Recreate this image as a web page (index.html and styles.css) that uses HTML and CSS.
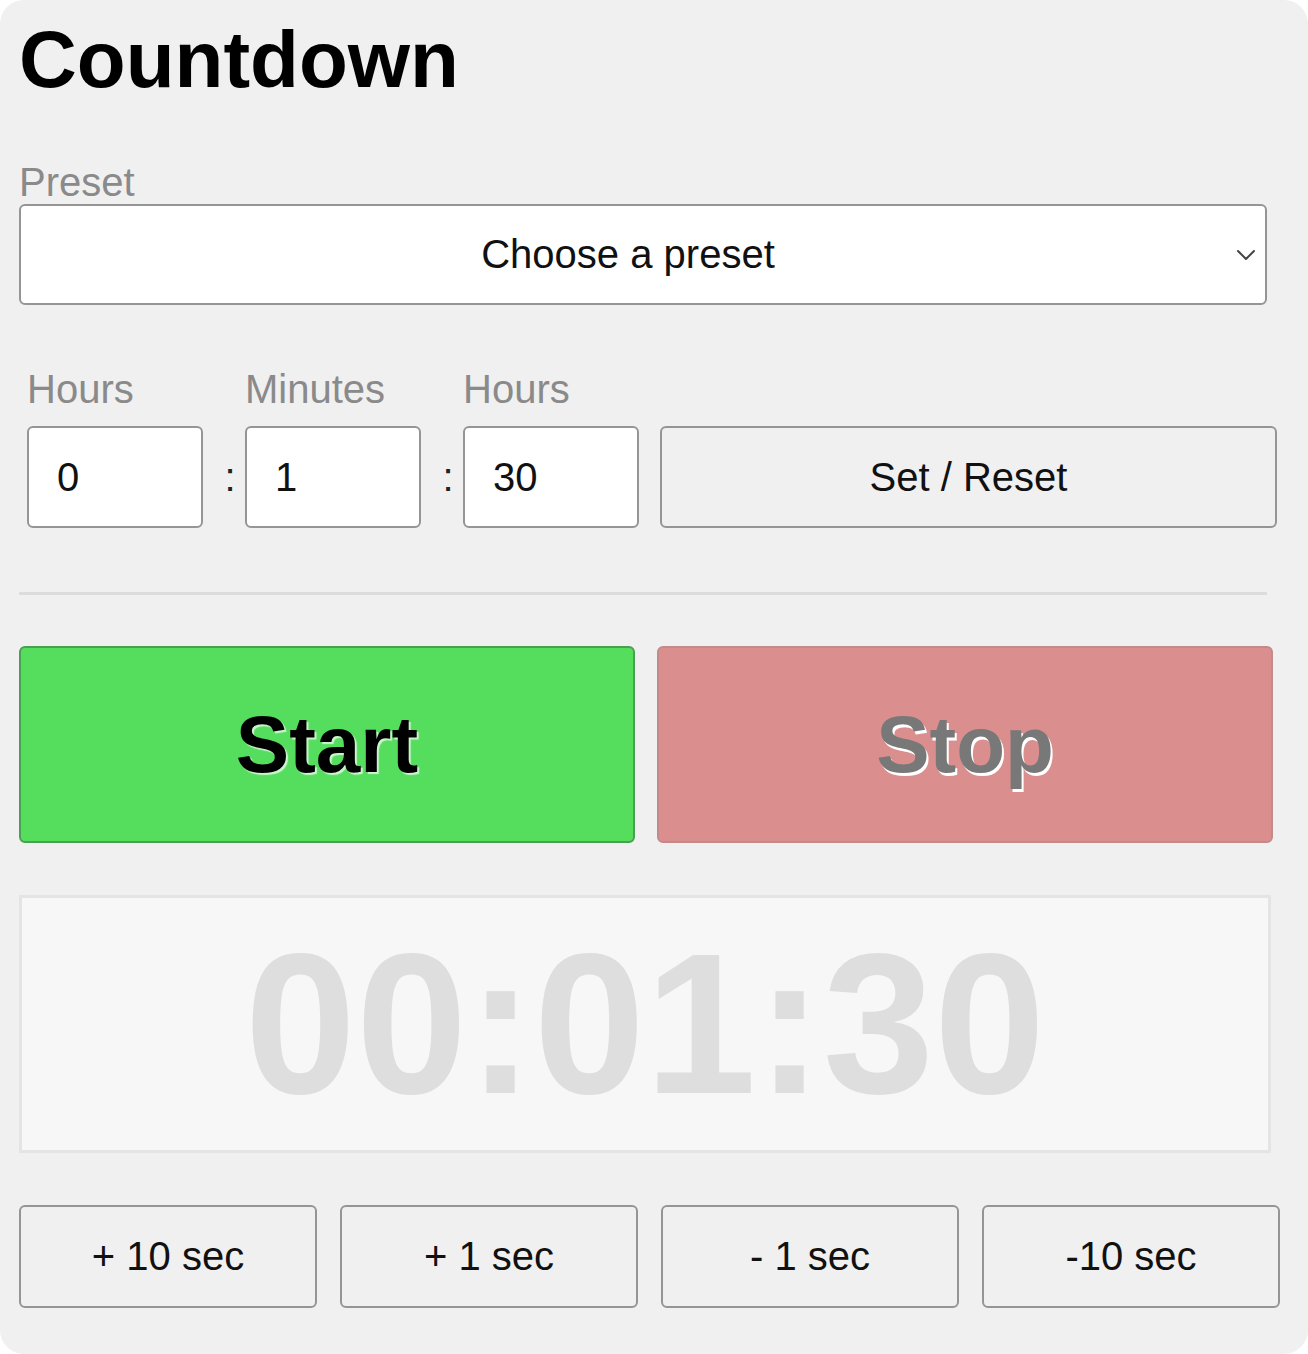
FILE: index.html
```html
<!DOCTYPE html>
<html lang="en">
<head>
<meta charset="utf-8">
<title>Countdown</title>
<link rel="stylesheet" href="styles.css">
</head>
<body>
<div class="app">
  <h1 class="title">Countdown</h1>

  <div class="label preset-label">Preset</div>
  <div class="select">
    <span class="select-text">Choose a preset</span>
    <svg class="chevron" width="20" height="12" viewBox="0 0 20 12" aria-hidden="true">
      <polyline points="2,2 10,10 18,2" fill="none" stroke="#444" stroke-width="2" stroke-linecap="round" stroke-linejoin="round"/>
    </svg>
  </div>

  <div class="time-row">
    <div class="field">
      <span class="label">Hours</span>
      <input class="num" type="text" value="0">
    </div>
    <span class="colon">:</span>
    <div class="field">
      <span class="label">Minutes</span>
      <input class="num" type="text" value="1">
    </div>
    <span class="colon">:</span>
    <div class="field">
      <span class="label">Hours</span>
      <input class="num" type="text" value="30">
    </div>
    <button class="btn set">Set / Reset</button>
  </div>

  <hr class="divider">

  <div class="controls">
    <button class="big start">Start</button>
    <button class="big stop" disabled>Stop</button>
  </div>

  <div class="display">00:01:30</div>

  <div class="adjust">
    <button class="btn">+ 10 sec</button>
    <button class="btn">+ 1 sec</button>
    <button class="btn">- 1 sec</button>
    <button class="btn">-10 sec</button>
  </div>
</div>
</body>
</html>
```

FILE: styles.css
```css
html, body {
  margin: 0;
  padding: 0;
  background: #ffffff;
}

body {
  font-family: "Liberation Sans", Arial, Helvetica, sans-serif;
  color: #111;
}

.app {
  box-sizing: border-box;
  width: 1308px;
  height: 1354px;
  background: #f0f0f0;
  border-radius: 24px;
  padding: 0 19px;
  overflow: hidden;
}

.title {
  margin: 20px 0 0;
  font-size: 80px;
  line-height: 80px;
  font-weight: bold;
  color: #000;
}

.label {
  display: block;
  font-size: 40px;
  line-height: 40px;
  color: #8a8a8a;
}

.preset-label {
  margin-top: 62px;
}

.select {
  position: relative;
  box-sizing: border-box;
  margin-top: 2px;
  width: 1248px;
  height: 101px;
  background: #fff;
  border: 2px solid #959595;
  border-radius: 6px;
  display: flex;
  align-items: center;
  justify-content: center;
  padding-right: 30px;
  font-size: 40px;
  color: #111;
}

.chevron {
  position: absolute;
  right: 9px;
  top: 43px;
}

.time-row {
  margin-top: 64px;
  padding-left: 8px;
  display: flex;
  align-items: flex-end;
  width: 1290px;
}

.field {
  display: flex;
  flex-direction: column;
  width: 176px;
}

.field .label {
  margin-bottom: 17px;
}

.num {
  box-sizing: border-box;
  width: 176px;
  height: 102px;
  margin: 0;
  border: 2px solid #959595;
  border-radius: 6px;
  background: #fff;
  padding: 0 0 0 28px;
  font-family: "Liberation Sans", Arial, sans-serif;
  font-size: 40px;
  color: #111;
  outline: none;
}

.colon {
  width: 42px;
  height: 102px;
  line-height: 102px;
  text-align: center;
  padding-left: 12px;
  box-sizing: border-box;
  font-size: 40px;
  color: #222;
}

.btn {
  box-sizing: border-box;
  height: 102px;
  margin: 0;
  border: 2px solid #959595;
  border-radius: 6px;
  background: #f0f0f0;
  font-family: "Liberation Sans", Arial, sans-serif;
  font-size: 40px;
  color: #111;
  padding: 0;
}

.set {
  width: 617px;
  margin-left: 21px;
}

.divider {
  margin: 64px 0 0;
  width: 1248px;
  height: 3px;
  border: 0;
  background: #dcdcdc;
}

.controls {
  margin-top: 51px;
  display: grid;
  grid-template-columns: 616px 616px;
  column-gap: 22px;
}

.big {
  box-sizing: border-box;
  height: 197px;
  margin: 0;
  border-radius: 6px;
  font-family: "Liberation Sans", Arial, sans-serif;
  font-size: 80px;
  font-weight: bold;
  padding: 0;
}

.start {
  background: #55dd5e;
  border: 2px solid #4a9f50;
  color: #000;
  text-shadow: 2px 2px 1px rgba(255, 255, 255, 0.7);
}

.stop {
  background: #da8f8e;
  border: 2px solid #c48a89;
  color: #787878;
  text-shadow: 2px 3px 0 #ffffff;
}

.display {
  box-sizing: border-box;
  margin-top: 52px;
  width: 1252px;
  height: 258px;
  background: #f7f7f7;
  border: 3px solid #e4e4e4;
  display: flex;
  align-items: center;
  justify-content: center;
  font-size: 200px;
  line-height: 1;
  font-weight: bold;
  color: #dedede;
}

.adjust {
  margin-top: 52px;
  display: grid;
  grid-template-columns: repeat(4, 298px);
  column-gap: 23px;
}

.adjust .btn {
  height: 103px;
}
```
